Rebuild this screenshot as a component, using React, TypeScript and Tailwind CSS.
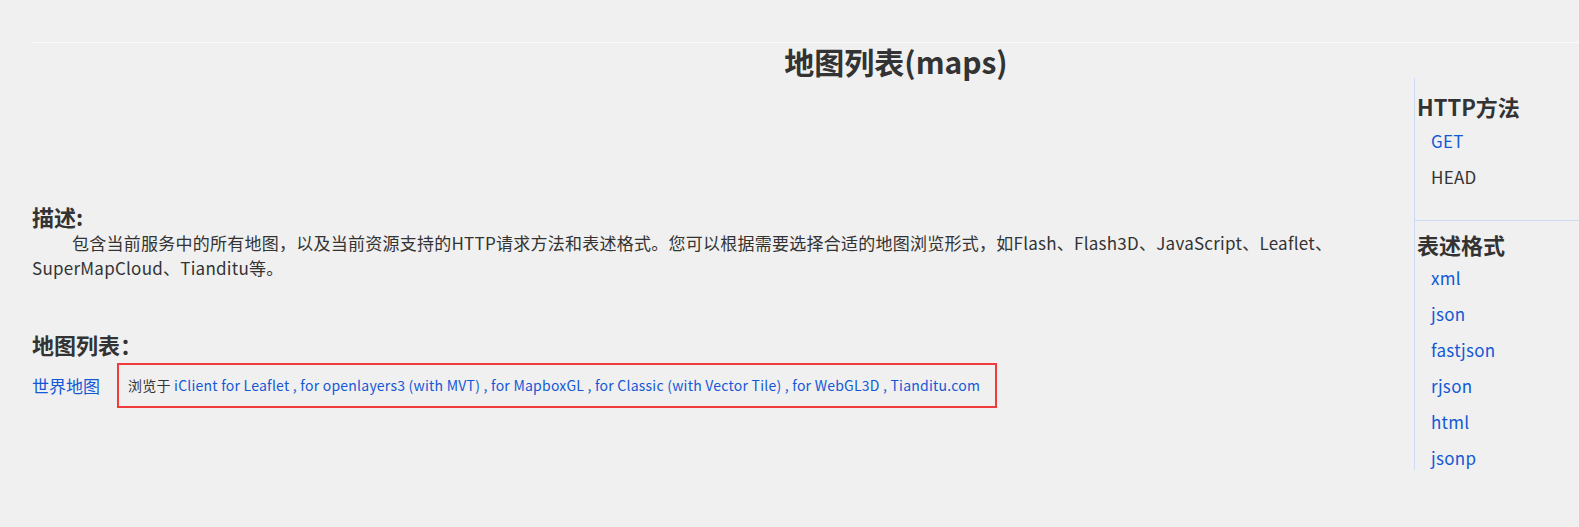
import React from "react";

const FONT = { fontFamily: '"Noto Sans CJK SC", "Noto Sans", sans-serif' };

function SideLink({ children, blue = true }: { children: React.ReactNode; blue?: boolean }) {
  return (
    <div className={`pl-[16px] h-[36px] leading-[36px] text-[17px] tracking-[0.3px] ${blue ? "text-[#1359d6]" : "text-[#333333]"}`}>
      {children}
    </div>
  );
}

export default function App() {
  const links = [
    "iClient for Leaflet",
    "for openlayers3 (with MVT)",
    "for MapboxGL",
    "for Classic (with Vector Tile)",
    "for WebGL3D",
    "Tianditu.com",
  ];
  return (
    <div className="w-full min-h-[527px] bg-[#f0f0f0] text-[#333333] pt-[42px] overflow-hidden" style={FONT}>
      <div className="ml-[32px] border-t border-[#f8fafd]" />
      <div className="pl-[213px] text-center text-[30px] font-bold leading-[36px] h-[35px] text-[#333333]">
        地图列表(maps)
      </div>
      <div className="flex">
        <div className="w-[1414px] shrink-0 pl-[32px] pt-[124px]">
          <div className="text-[22px] font-bold leading-[28px]">描述:</div>
          <div className="text-[17px] leading-[25px] indent-[40px] whitespace-nowrap tracking-[0.25px]">
            包含当前服务中的所有地图，以及当前资源支持的HTTP请求方法和表述格式。您可以根据需要选择合适的地图浏览形式，如Flash、Flash3D、JavaScript、Leaflet、
            <br />
            SuperMapCloud、Tianditu等。
          </div>
          <div className="mt-[50px] text-[22px] font-bold leading-[28px]">地图列表：</div>
          <div className="mt-[5px] flex items-center">
            <a className="text-[17px] text-[#1359d6] leading-[25px] w-[85px] shrink-0">世界地图</a>
            <div className="h-[45px] w-[880px] shrink-0 border-2 border-[#f03c3c] pl-[9px] flex items-center text-[14px] whitespace-nowrap tracking-[0.23px]">
              <span>浏览于&nbsp;</span>
              {links.map((l, i) => (
                <React.Fragment key={l}>
                  <a className="text-[#1359d6]">{l}</a>
                  {i < links.length - 1 && <span className="text-[#1359d6]">&nbsp;,&nbsp;</span>}
                </React.Fragment>
              ))}
            </div>
          </div>
        </div>
        <div className="flex-1 min-w-0 h-[392px] border-l border-[#c9dbf5]">
          <div className="h-[143px] border-b border-[#c9dbf5] pt-[14px]">
            <div className="pl-[2px] text-[22px] font-bold leading-[28px]">HTTP方法</div>
            <div className="h-[3px]" />
            <SideLink>GET</SideLink>
            <SideLink blue={false}>HEAD</SideLink>
          </div>
          <div className="pt-[9px]">
            <div className="pl-[2px] text-[22px] font-bold leading-[28px]">表述格式</div>
            <div className="h-[2px]" />
            <SideLink>xml</SideLink>
            <SideLink>json</SideLink>
            <SideLink>fastjson</SideLink>
            <SideLink>rjson</SideLink>
            <SideLink>html</SideLink>
            <SideLink>jsonp</SideLink>
          </div>
        </div>
      </div>
    </div>
  );
}
